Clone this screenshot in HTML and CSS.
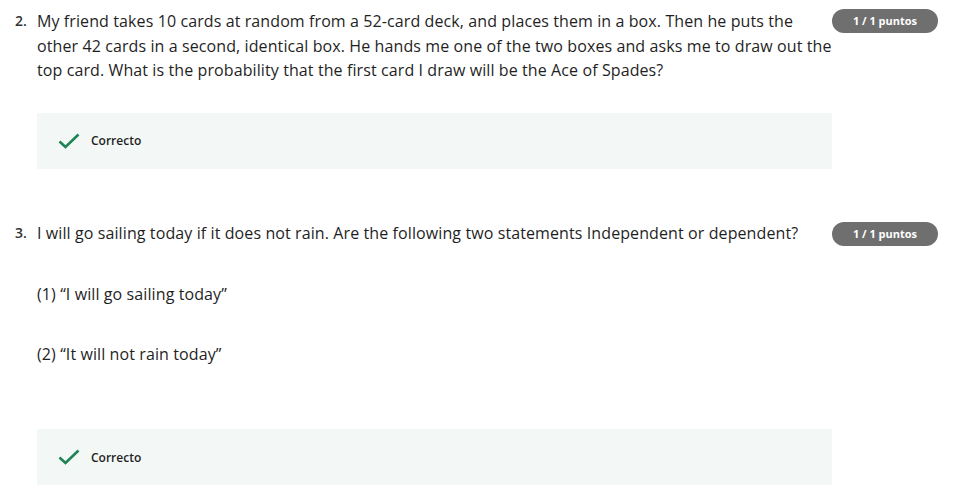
FILE: index.html
```html
<!DOCTYPE html>
<html>
<head>
<meta charset="utf-8">
<link rel="stylesheet" href="styles.css">
</head>
<body>
<div class="page">
  <div class="question q2">
    <div class="num">2.</div>
    <div class="content">
      <p class="prompt">My friend takes 10 cards at random from a 52-card deck, and places them in a box. Then he puts the other 42 cards in a second, identical box. He hands me one of the two boxes and asks me to draw out the top card. What is the probability that the first card I draw will be the Ace of Spades?</p>
      <div class="feedback">
        <svg class="check" width="22" height="16" viewBox="0 0 22 16"><path d="M1.5 8.5 L7.5 14 L20.5 1.5" fill="none" stroke="#1f8354" stroke-width="2.6"/></svg>
        <span class="label">Correcto</span>
      </div>
    </div>
    <div class="badge">1 / 1 puntos</div>
  </div>
  <div class="question q3">
    <div class="num">3.</div>
    <div class="content">
      <p class="prompt">I will go sailing today if it does not rain. Are the following two statements Independent or dependent?</p>
      <p class="stmt">(1) “I will go sailing today”</p>
      <p class="stmt">(2) “It will not rain today”</p>
      <div class="feedback">
        <svg class="check" width="22" height="16" viewBox="0 0 22 16"><path d="M1.5 8.5 L7.5 14 L20.5 1.5" fill="none" stroke="#1f8354" stroke-width="2.6"/></svg>
        <span class="label">Correcto</span>
      </div>
    </div>
    <div class="badge">1 / 1 puntos</div>
  </div>
</div>
</body>
</html>
```
FILE: styles.css
```css
html, body {
  margin: 0;
  padding: 0;
  background: #ffffff;
}
body {
  font-family: "Open Sans", "Liberation Sans", sans-serif;
  color: #1f1f1f;
}
.page {
  padding: 9px 0 0 15px;
}
.question {
  display: grid;
  grid-template-columns: 22px 795px 106px;
  align-items: start;
}
.q3 {
  margin-top: 52px;
}
.num {
  font-size: 14px;
  line-height: 24px;
  font-weight: 600;
  color: #333;
}
.prompt, .stmt {
  margin: 0;
  font-size: 16px;
  line-height: 24.5px;
  letter-spacing: 0.1px;
}
.stmt {
  margin-top: 37px;
}
.stmt + .stmt {
  margin-top: 35px;
}
.feedback {
  margin-top: 30px;
  height: 56px;
  background: #f3f8f6;
  display: flex;
  align-items: center;
  padding-left: 21px;
}
.q3 .feedback {
  margin-top: 63px;
}
.check {
  display: block;
  margin-right: 11px;
}
.label {
  font-size: 12px;
  font-weight: 600;
  color: #1f1f1f;
}
.badge {
  height: 24px;
  border-radius: 12px;
  background: #6f6f6f;
  color: #fff;
  font-size: 11px;
  font-weight: 700;
  line-height: 24px;
  text-align: center;
}
.q3 .badge {
  margin-top: 1px;
}
```
